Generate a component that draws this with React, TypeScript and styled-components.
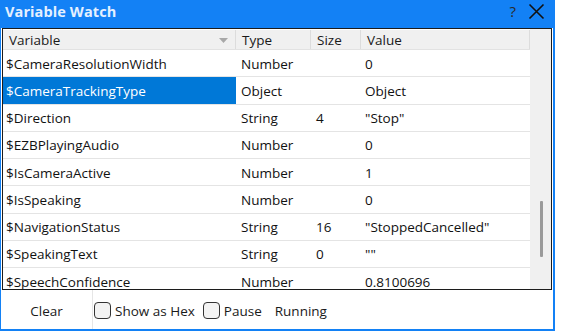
import React from "react";
import styled, { createGlobalStyle } from "styled-components";

const Global = createGlobalStyle`
  html, body { margin: 0; padding: 0; background: #ffffff; overflow: hidden; }
  body { font-family: "Open Sans", "Noto Sans", sans-serif; }
`;

const BLUE = "#1381f5";

const Window = styled.div`
  width: 555px;
  height: 331px;
  box-sizing: border-box;
  background: ${BLUE};
  padding: 0 2px 2px 1px;
  display: flex;
  flex-direction: column;
`;

const TitleBar = styled.div`
  height: 28px;
  flex: none;
  display: flex;
  align-items: center;
  padding: 0 8px 0 4px;
  color: #e4f0ff;
`;

const Title = styled.div`
  flex: 1;
  font-family: "Open Sans", sans-serif;
  font-weight: 700;
  font-size: 14.5px;
  letter-spacing: 0.1px;
  margin-top: -5px;
`;

const TitleButton = styled.div`
  color: #1a1a1a;
  font-family: "Open Sans", sans-serif;
  display: flex;
  align-items: center;
  justify-content: center;
  margin-top: -6px;
`;

const Body = styled.div`
  flex: 1;
  background: #ffffff;
  display: flex;
  flex-direction: column;
  min-height: 0;
`;

const Grid = styled.div`
  height: 260px;
  flex: none;
  margin: 0 1px;
  border: 1px solid #1c1c1c;
  display: flex;
  overflow: hidden;
  background: #ffffff;
`;

const Table = styled.div`
  flex: 1;
  display: flex;
  flex-direction: column;
  overflow: hidden;
`;

const cols = "233px 75px 50px 1fr";

const HeaderRow = styled.div`
  display: grid;
  grid-template-columns: ${cols};
  height: 21px;
  flex: none;
  background: #f0f0f0;
  border-top: 1px solid #ffffff;
  border-bottom: 1px solid #e2e2e2;
  box-sizing: border-box;
`;

const HeaderCell = styled.div<{ $pad: number }>`
  position: relative;
  display: flex;
  align-items: center;
  padding-left: ${(p) => p.$pad}px;
  font-size: 13.5px;
  color: #1a1a1a;
  border-right: 1px solid #dcdcdc;
`;

const SortArrow = styled.svg`
  position: absolute;
  right: 7px;
  top: 8px;
`;

const Row = styled.div`
  display: grid;
  grid-template-columns: ${cols};
  height: 27.25px;
  flex: none;
  box-sizing: border-box;
  border-bottom: 1px solid #e4e4e4;
`;

const Cell = styled.div<{ $pad: number; $selected?: boolean }>`
  display: flex;
  align-items: center;
  padding-left: ${(p) => p.$pad}px;
  padding-top: 1px;
  font-size: 13.5px;
  white-space: nowrap;
  overflow: hidden;
  color: ${(p) => (p.$selected ? "#ffffff" : "#111111")};
  background: ${(p) => (p.$selected ? "#0078d7" : "transparent")};
`;

const ScrollTrack = styled.div`
  width: 21px;
  flex: none;
  background: #f0f0f0;
  position: relative;
`;

const ScrollThumb = styled.div`
  position: absolute;
  left: 10px;
  top: 172px;
  width: 3px;
  height: 56px;
  background: #9a9a9a;
  border-radius: 1px;
`;

const Footer = styled.div`
  flex: 1;
  display: flex;
  align-items: stretch;
  font-size: 13.5px;
  color: #1a1a1a;
`;

const ClearButton = styled.div`
  width: 92px;
  flex: none;
  display: flex;
  align-items: center;
  justify-content: center;
  border-right: 1px solid #e6e6e6;
  padding-top: 2px;
  box-sizing: border-box;
`;

const CheckLabel = styled.label<{ $gapBefore: number }>`
  display: flex;
  align-items: center;
  gap: 4px;
  margin-left: ${(p) => p.$gapBefore}px;
  padding-top: 2px;
`;

const Box = styled.span`
  width: 17px;
  height: 17px;
  box-sizing: border-box;
  border: 1px solid #333333;
  border-radius: 4px;
  background: #f3f3f3;
  display: inline-block;
`;

const Status = styled.div`
  display: flex;
  align-items: center;
  margin-left: 13px;
  padding-top: 2px;
`;

const rows: [string, string, string, string][] = [
  ["$CameraResolutionWidth", "Number", "", "0"],
  ["$CameraTrackingType", "Object", "", "Object"],
  ["$Direction", "String", "4", "\"Stop\""],
  ["$EZBPlayingAudio", "Number", "", "0"],
  ["$IsCameraActive", "Number", "", "1"],
  ["$IsSpeaking", "Number", "", "0"],
  ["$NavigationStatus", "String", "16", "\"StoppedCancelled\""],
  ["$SpeakingText", "String", "0", "\"\""],
  ["$SpeechConfidence", "Number", "", "0.8100696"],
];

export default function App() {
  return (
    <>
      <Global />
      <Window>
        <TitleBar>
          <Title>Variable Watch</Title>
          <TitleButton style={{ fontSize: 15, marginRight: 12, color: "#2a2a2a" }}>?</TitleButton>
          <TitleButton>
            <svg width="17" height="17" viewBox="0 0 17 17">
              <path d="M1.5 1.5 L15.5 15.5 M15.5 1.5 L1.5 15.5" stroke="#111" strokeWidth="1.6" />
            </svg>
          </TitleButton>
        </TitleBar>
        <Body>
          <Grid>
            <Table>
              <HeaderRow>
                <HeaderCell $pad={6}>
                  Variable
                  <SortArrow width="9" height="5" viewBox="0 0 9 5">
                    <path d="M0 0 L9 0 L4.5 5 Z" fill="#a8a8a8" />
                  </SortArrow>
                </HeaderCell>
                <HeaderCell $pad={6}>Type</HeaderCell>
                <HeaderCell $pad={6}>Size</HeaderCell>
                <HeaderCell $pad={6}>Value</HeaderCell>
              </HeaderRow>
              {rows.map((r, i) => (
                <Row key={r[0]}>
                  <Cell $pad={3} $selected={i === 1}>{r[0]}</Cell>
                  <Cell $pad={5}>{r[1]}</Cell>
                  <Cell $pad={5}>{r[2]}</Cell>
                  <Cell $pad={4}>{r[3]}</Cell>
                </Row>
              ))}
            </Table>
            <ScrollTrack>
              <ScrollThumb />
            </ScrollTrack>
          </Grid>
          <Footer>
            <ClearButton>Clear</ClearButton>
            <CheckLabel $gapBefore={1}>
              <Box />
              Show as Hex
            </CheckLabel>
            <CheckLabel $gapBefore={8}>
              <Box />
              Pause
            </CheckLabel>
            <Status>Running</Status>
          </Footer>
        </Body>
      </Window>
    </>
  );
}
